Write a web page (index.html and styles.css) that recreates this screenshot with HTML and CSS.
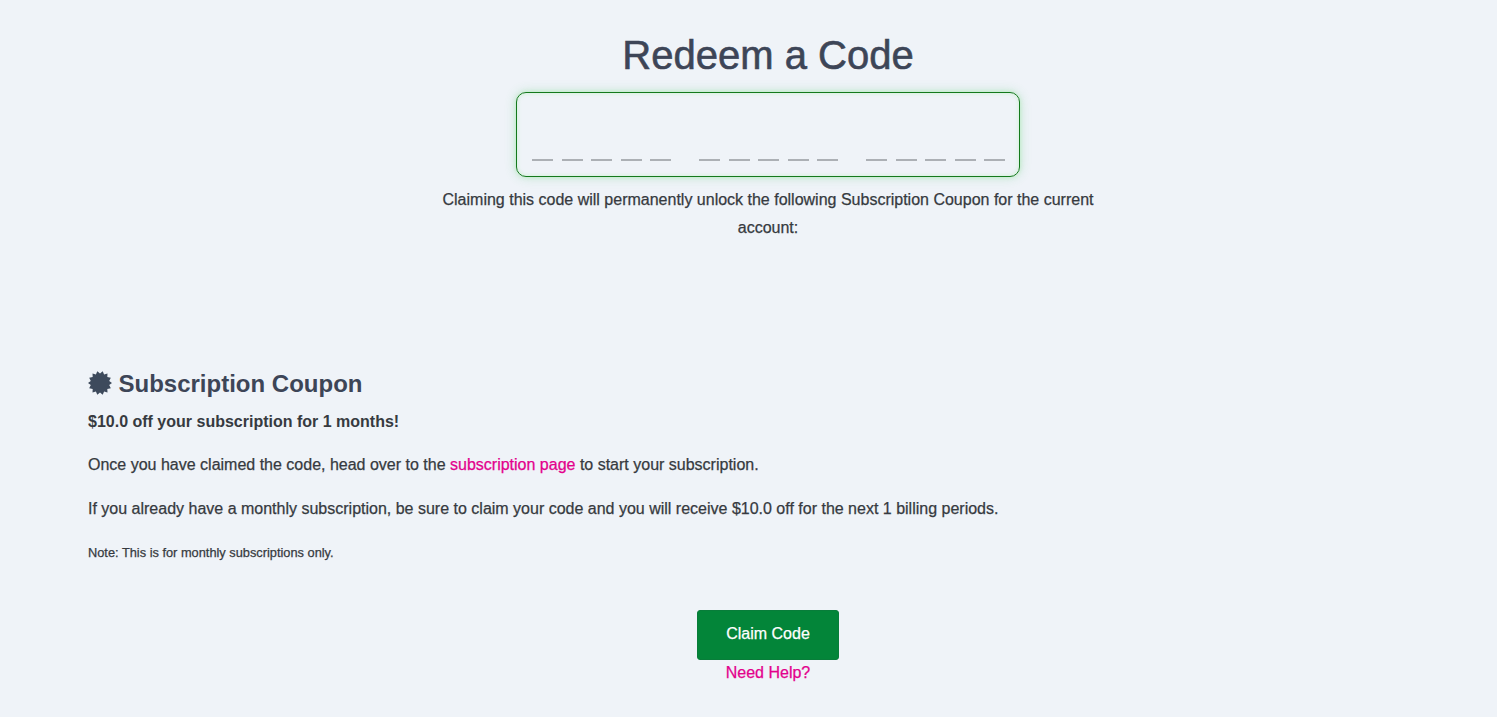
FILE: index.html
```html
<!DOCTYPE html>
<html lang="en">
<head>
  <meta charset="UTF-8">
  <meta name="viewport" content="width=device-width, initial-scale=1.0">
  <title>Redeem a Code</title>
  <link rel="stylesheet" href="styles.css">
</head>
<body>

  <main class="container">
    <h1>Redeem a Code</h1>

    <div class="code-box">
      <div class="code-group"><span></span><span></span><span></span><span></span><span></span></div>
      <div class="code-group"><span></span><span></span><span></span><span></span><span></span></div>
      <div class="code-group"><span></span><span></span><span></span><span></span><span></span></div>
    </div>

    <p class="claim-info">Claiming this code will permanently unlock the following Subscription Coupon for the current account:</p>

    <section class="coupon">
      <h2>
        <svg class="badge-icon" viewBox="0 0 24 24" aria-hidden="true">
          <path d="M12 2.6L14.7.3L16.1 3.5L19.5 2.6L19.3 6.1L22.8 6.8L21.2 9.9L24 12L21.2 14.1L22.8 17.2L19.3 17.9L19.5 21.4L16.1 20.5L14.7 23.7L12 21.4L9.3 23.7L7.9 20.5L4.5 21.4L4.7 17.9L1.2 17.2L2.8 14.1L0 12L2.8 9.9L1.2 6.8L4.7 6.1L4.5 2.6L7.9 3.5L9.3.3Z"/>
        </svg>
        Subscription Coupon
      </h2>
      <p class="offer">$10.0 off your subscription for 1 months!</p>
      <p>Once you have claimed the code, head over to the <a href="#">subscription page</a> to start your subscription.</p>
      <p>If you already have a monthly subscription, be sure to claim your code and you will receive $10.0 off for the next 1 billing periods.</p>
      <p class="note">Note: This is for monthly subscriptions only.</p>
    </section>

    <div class="actions">
      <button class="claim-button">Claim Code</button>
      <a href="#">Need Help?</a>
    </div>
  </main>

</body>
</html>
```

FILE: styles.css
```css
body {
  margin: 0;
  background-color: #eff3f8;
  color: #363a40;
  font-family: "Liberation Sans", Arial, sans-serif;
  font-size: 16px;
  line-height: 28px;
  -webkit-text-stroke: 0.25px;
}
.container {
  padding: 30px 49px 0 88px;
}
h1, h2 {
  margin: 0;
  color: #3d4557;
}
h1 {
  font-size: 40px;
  font-weight: normal;
  line-height: 50px;
  text-align: center;
  -webkit-text-stroke: 0.6px;
}
p {
  margin: 0 0 16px;
}
a {
  color: #e3008c;
  text-decoration: none;
}
.code-box {
  box-sizing: border-box;
  display: flex;
  align-items: flex-end;
  justify-content: space-between;
  width: 504px;
  height: 85px;
  margin: 12px auto 9px;
  padding: 0 14px 15px 15px;
  border: 1px solid #14791c;
  border-radius: 10px;
  box-shadow: 0 0 12px rgba(60, 190, 90, 0.24), 0 0 4px rgba(144, 238, 144, 0.4), inset 0 0 4px rgba(144, 238, 144, 0.4);
}
.code-group {
  display: flex;
  gap: 8.5px;
}
.code-group span {
  width: 21px;
  height: 2px;
  background-color: #acb0b5;
}
.claim-info {
  width: 680px;
  margin: 0 auto;
  text-align: center;
}
.coupon {
  margin-top: 126px;
}
h2 {
  display: flex;
  align-items: center;
  gap: 6.5px;
  font-size: 24px;
  line-height: 32px;
  margin-bottom: 8px;
}
.badge-icon {
  width: 24px;
  height: 24px;
  margin-bottom: 2px;
  fill: #3d4a5c;
}
.offer {
  font-weight: bold;
  margin-bottom: 15px;
}
h2, .offer {
  -webkit-text-stroke: 0;
}
.note {
  font-size: 12.8px;
  margin-bottom: 0;
}
.actions {
  display: flex;
  flex-direction: column;
  align-items: center;
  margin-top: 43px;
}
.claim-button {
  width: 142px;
  height: 50px;
  margin-bottom: -1px;
  padding: 0 0 3px;
  border: 1px solid #087d3a;
  border-radius: 3px;
  background-color: #038539;
  color: #fff;
  font-family: inherit;
  font-size: 16px;
  cursor: pointer;
}
```
